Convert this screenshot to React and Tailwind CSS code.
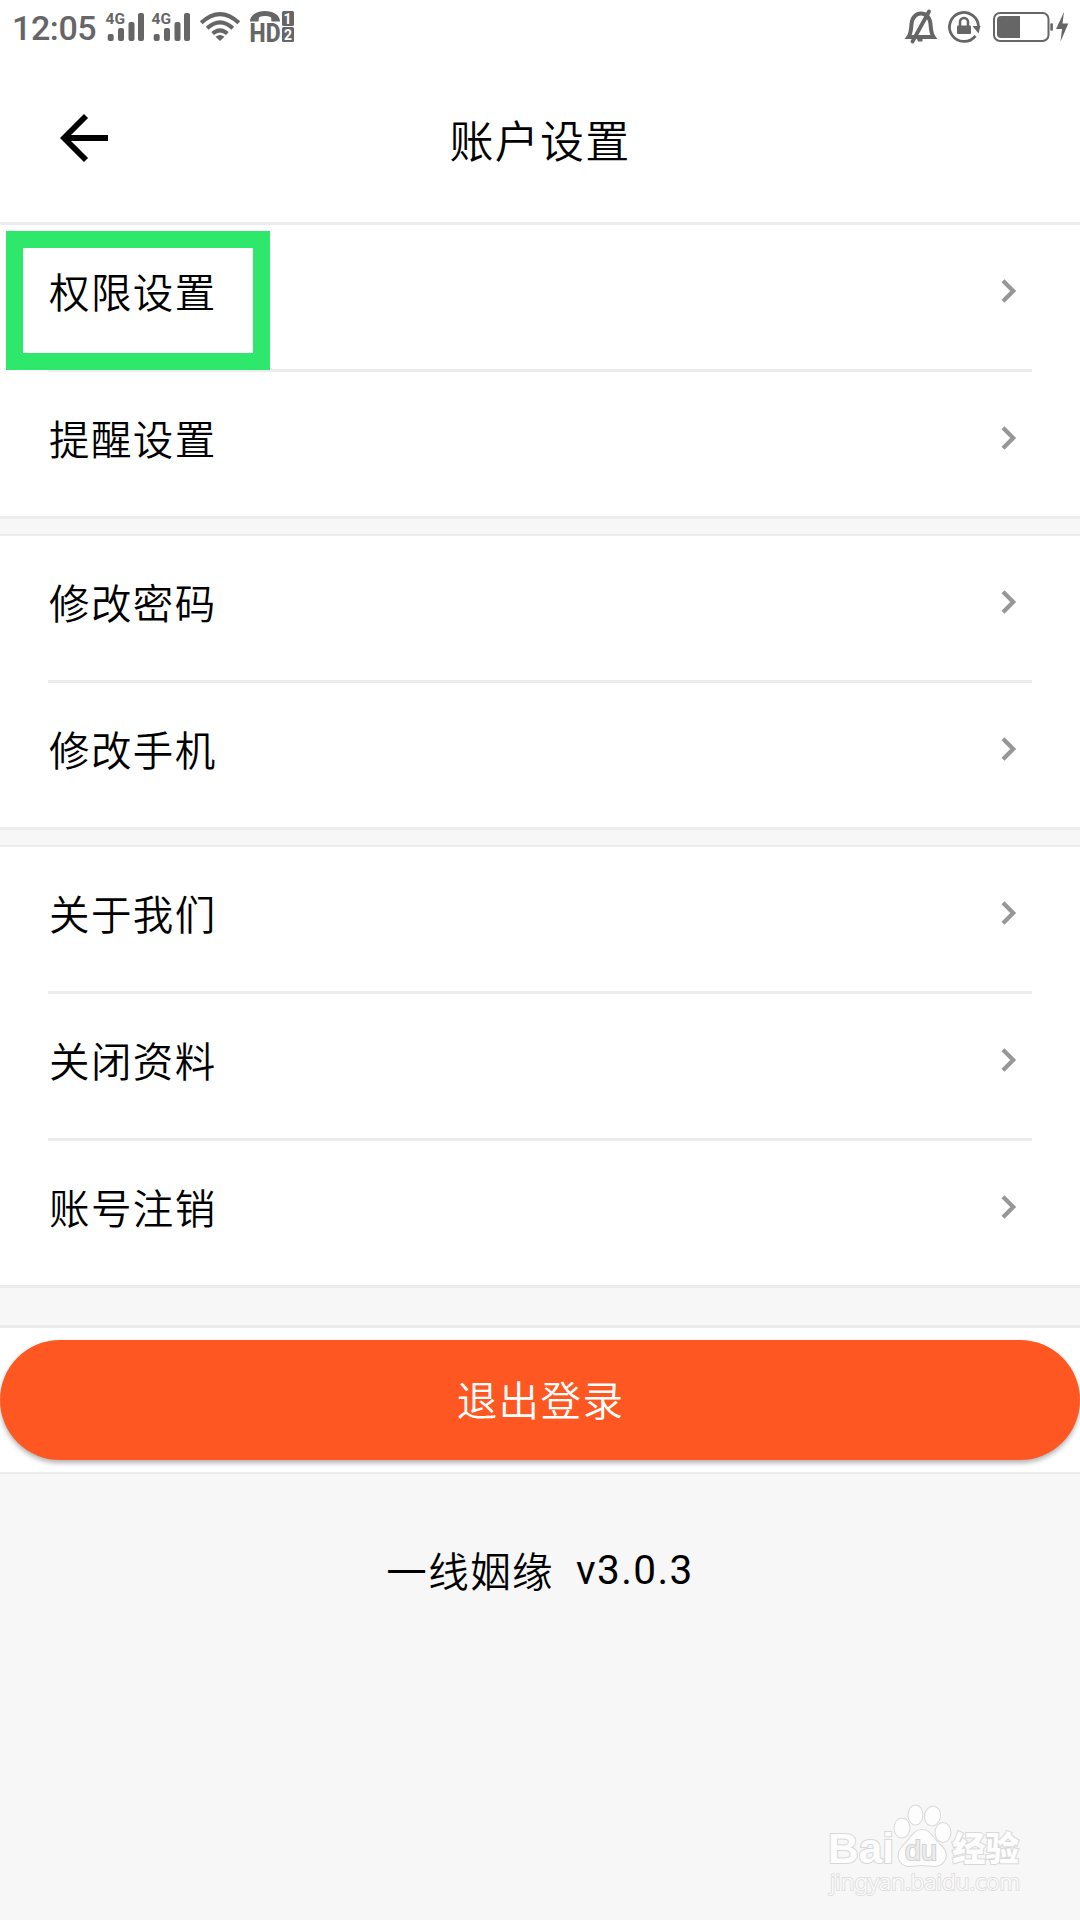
const groups = [
  ["权限设置", "提醒设置"],
  ["修改密码", "修改手机"],
  ["关于我们", "关闭资料", "账号注销"],
];

function Signal({ x }) {
  return (
    <g transform={`translate(${x} 0)`}>
      <text x="-0.5" y="24" fontSize="15.5" fontWeight="700" fontFamily="Roboto, sans-serif">
        4G
      </text>
      <rect x="1.7" y="34" width="6" height="7" rx="2" />
      <rect x="12" y="28" width="6" height="13" rx="2" />
      <rect x="22.5" y="22" width="6" height="19" rx="2" />
      <rect x="32" y="13" width="6" height="28" rx="2" />
    </g>
  );
}

function StatusBar() {
  return (
    <div className="flex h-[54px] items-start justify-between text-[#666666]">
      <div className="flex">
        <span className="w-[100px] pl-[12px] pt-[8px] text-[34px] leading-[40px] font-medium tracking-[-0.4px] whitespace-nowrap">
          12:05
        </span>
        {/* Signal, wifi, HD voice */}
        <svg width="200" height="54" viewBox="100 0 200 54" fill="currentColor">
          <Signal x={106} />
          <Signal x={152} />
          <g fill="none" stroke="currentColor" strokeWidth="4">
            <path d="M201.2 22.8 Q220 5.5 238.8 22.8" />
            <path d="M207.2 28.3 Q220 16.5 232.8 28.3" />
            <path d="M212.6 33.6 Q220 27 227.4 33.6" />
          </g>
          <path d="M215.5 36.8 Q220 33 224.5 36.8 L220 41 Z" />
          <path d="M250 21.5 C250 7.5 280 7.5 280 21.5 L271.5 21.5 L271 17.2 C267.5 15.7 262.5 15.7 259 17.2 L258.5 21.5 Z" />
          <text x="249.5" y="41.8" fontSize="25.5" fontWeight="800" fontFamily="Roboto, sans-serif" textLength="31" lengthAdjust="spacingAndGlyphs">
            HD
          </text>
          <rect x="282" y="11" width="12" height="15" rx="1.5" />
          <rect x="282" y="27" width="12" height="15" rx="1.5" />
          <g fill="#ffffff" fontSize="14" fontWeight="700" fontFamily="Roboto, sans-serif">
            <text x="283.6" y="23.6">1</text>
            <text x="284" y="39.6">2</text>
          </g>
        </svg>
      </div>
      {/* Muted, rotation lock, battery */}
      <svg width="190" height="54" viewBox="890 0 190 54" fill="none" stroke="currentColor">
        <path d="M908.5 37 H933.5 C931 33.5 931 29.5 930.5 24 C930 17.5 926 13.5 921 13.5 C916 13.5 912 17.5 911.5 24 C911 29.5 911 33.5 908.5 37 Z" strokeWidth="4" />
        <path d="M929 11.5 L912.5 41.5" strokeWidth="3.8" strokeLinecap="round" />
        <path d="M917 39 H922.5 V41.5 H918 Z" fill="currentColor" stroke="none" />
        <path d="M978.5 27 A14.5 14.5 0 1 0 975.5 35.8" strokeWidth="2.8" />
        <path d="M972.5 26 L980.5 26 L978.5 33.5 Z" fill="currentColor" stroke="none" />
        <rect x="957" y="25.5" width="14" height="8.5" rx="1" fill="currentColor" stroke="none" />
        <path d="M960 26 V22 A4 4 0 0 1 968 22 V26" strokeWidth="2.6" />
        <rect x="994" y="13" width="54.5" height="28" rx="6" strokeWidth="2" />
        <path d="M1020 16 V38 H1001 Q997 38 997 34 V20 Q997 16 1001 16 Z" fill="currentColor" stroke="none" />
        <rect x="1050.3" y="23.3" width="2.6" height="7.4" rx="1" fill="currentColor" stroke="none" />
        <path d="M1064 12 L1056 29 H1062 L1060.5 41.5 L1068.3 23.5 H1062.5 Z" fill="currentColor" stroke="none" />
      </svg>
    </div>
  );
}

function Header() {
  return (
    <header className="grid h-[168px] grid-cols-[120px_1fr_120px] items-center">
      <svg className="ml-[60px]" width="50" height="50" viewBox="0 0 50 50" fill="none" stroke="#000000" strokeWidth="5.8">
        <path d="M4 25 H48" />
        <path d="M26 3 L4 25 L26 47" />
      </svg>
      <h1 className="pt-[9px] text-center text-[44px] leading-[60px] font-[350] tracking-[1.2px]">账户设置</h1>
    </header>
  );
}

function Row({ label, active, last }) {
  return (
    <li className="relative h-[147px] px-12">
      <div
        className={
          last
            ? "flex h-[147px] items-center justify-between pb-[15px]"
            : "flex h-[147px] items-center justify-between border-b-[3px] border-[#ececef] pb-[12px]"
        }
      >
        <span className="pt-[6px] pl-px text-[40.5px] leading-[60px] tracking-[1.4px]">{label}</span>
        <svg className="mr-[14px]" width="20" height="30" viewBox="0 0 20 30" fill="none" stroke="#969799" strokeWidth="4.2">
          <path d="M5 4.8 L15.2 15 L5 25.2" />
        </svg>
      </div>
      {active && (
        <div className="absolute left-[5.5px] top-[5.5px] h-[139.5px] w-[264.5px] border-[17.5px] border-[#2ee86b]" />
      )}
    </li>
  );
}

function Group({ items, first }) {
  return (
    <ul className={first ? "bg-white" : "mt-[15.2px] border-t-2 border-[#ececef] bg-white"}>
      {items.map((label, i) => (
        <Row key={label} label={label} active={first && i === 0} last={i === items.length - 1} />
      ))}
      <li className="-mt-[3px] h-[3px] bg-[#ececef]" />
    </ul>
  );
}

function Watermark() {
  return (
    <svg className="absolute left-[820px] top-[1795px]" width="210" height="110" viewBox="820 1795 210 110" fill="#fdfdfd" stroke="#d8d8d8" strokeWidth="2" paintOrder="stroke">
      <text x="828" y="1863" fontSize="42" fontWeight="700" fontFamily="'Liberation Sans', sans-serif" textLength="66" lengthAdjust="spacingAndGlyphs">
        Bai
      </text>
      <ellipse cx="902" cy="1828" rx="7.5" ry="9.5" />
      <ellipse cx="915.5" cy="1815" rx="7" ry="9.5" />
      <ellipse cx="932.5" cy="1816" rx="7.5" ry="9.5" transform="rotate(10 932.5 1816)" />
      <ellipse cx="943" cy="1832.5" rx="7.5" ry="9.5" />
      <path d="M922 1830 C914 1830 911 1838 905 1844 C899 1849 897 1856 900 1861 C905 1869 914 1865 922 1865 C930 1865 939 1869 944 1861 C948 1855 945 1849 939 1844 C933 1838 930 1830 922 1830 Z" />
      <text x="905" y="1859.5" fontSize="27" fontFamily="'Liberation Sans', sans-serif" textLength="32" lengthAdjust="spacingAndGlyphs" fill="#ececec" stroke="#d2d2d2" strokeWidth="2">
        du
      </text>
      <text x="952" y="1861" fontSize="34" fontWeight="900" fontFamily="'Noto Sans CJK SC', sans-serif" textLength="67" lengthAdjust="spacingAndGlyphs">
        经验
      </text>
      <text x="830" y="1890" fontSize="22" fontFamily="'Noto Sans', sans-serif" textLength="190" lengthAdjust="spacingAndGlyphs" stroke="#e0e0e0">
        jingyan.baidu.com
      </text>
    </svg>
  );
}

export default function App() {
  return (
    <div className="relative h-[1920px] w-[1080px] overflow-hidden bg-[#f7f7f7] font-[Roboto,'Noto_Sans_CJK_SC',sans-serif] font-[350] text-black">
      <div className="border-b-[3px] border-[#ececef] bg-white">
        <StatusBar />
        <Header />
      </div>

      {groups.map((items, i) => (
        <Group key={items[0]} items={items} first={i === 0} />
      ))}

      {/* Logout */}
      <div className="mt-[36.6px] h-[149px] border-t-[3px] border-b-2 border-[#ececef] bg-white pt-[12px]">
        <button className="block h-[120px] w-full rounded-full bg-[#ff5722] pt-[5px] pl-px text-[40.5px] leading-[60px] tracking-[1.4px] text-white shadow-[0_3px_5px_rgba(0,0,0,0.3)]">
          退出登录
        </button>
      </div>

      <p className="mt-[66px] flex justify-center gap-[22px] text-[40.5px] leading-[60px] tracking-[1.4px]">
        <span className="pt-[3px]">一线姻缘</span>
        <span className="font-normal">v3.0.3</span>
      </p>

      <Watermark />
    </div>
  );
}
